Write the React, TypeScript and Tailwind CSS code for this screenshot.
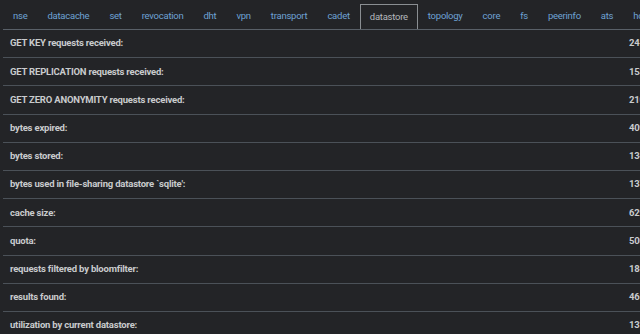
import React from "react";

// tabs across the top, "datastore" is the active one
const tabs = [
  "nse",
  "datacache",
  "set",
  "revocation",
  "dht",
  "vpn",
  "transport",
  "cadet",
  "datastore",
  "topology",
  "core",
  "fs",
  "peerinfo",
  "ats",
  "hostlist",
];

// statistics of the datastore subsystem
const rows: [string, string][] = [
  ["GET KEY requests received:", "2417"],
  ["GET REPLICATION requests received:", "1532"],
  ["GET ZERO ANONYMITY requests received:", "2109"],
  ["bytes expired:", "40960"],
  ["bytes stored:", "1348576"],
  ["bytes used in file-sharing datastore `sqlite':", "1372160"],
  ["cache size:", "6291456"],
  ["quota:", "5000000"],
  ["requests filtered by bloomfilter:", "1843"],
  ["results found:", "4612"],
  ["utilization by current datastore:", "13%"],
];

const App: React.FC = () => {
  return (
    <div
      className="w-[640px] h-[334px] overflow-hidden bg-[#232427]"
      style={{ fontFamily: "Roboto, 'Liberation Sans', sans-serif" }}
    >
      <div className="w-[660px] pl-[3px]">
        {/* tab strip */}
        <div className="flex h-[30px] items-end border-b border-[#596068] whitespace-nowrap">
          {tabs.map((t) => (
            <div
              key={t}
              className={
                t === "datastore"
                  ? "h-[25px] px-[9px] flex items-center text-[9.5px] tracking-[-0.25px] text-[#b4b8bc] border border-b-0 border-[#8a8e92] bg-[#232427]"
                  : "h-[25px] px-[10px] flex items-center text-[9.5px] tracking-[-0.25px] text-[#6ea2d4]"
              }
            >
              {t}
            </div>
          ))}
        </div>

        {/* stats table */}
        {rows.map(([label, value]) => (
          <div
            key={label}
            className="flex h-[28.2px] items-center justify-between border-b border-[#4b5158] pl-[7px] text-[9.5px] tracking-[-0.2px] font-bold text-[#c9cbcd] whitespace-nowrap"
          >
            <span>{label}</span>
            <span className="w-[31px]">{value}</span>
          </div>
        ))}
      </div>
    </div>
  );
};

export default App;
